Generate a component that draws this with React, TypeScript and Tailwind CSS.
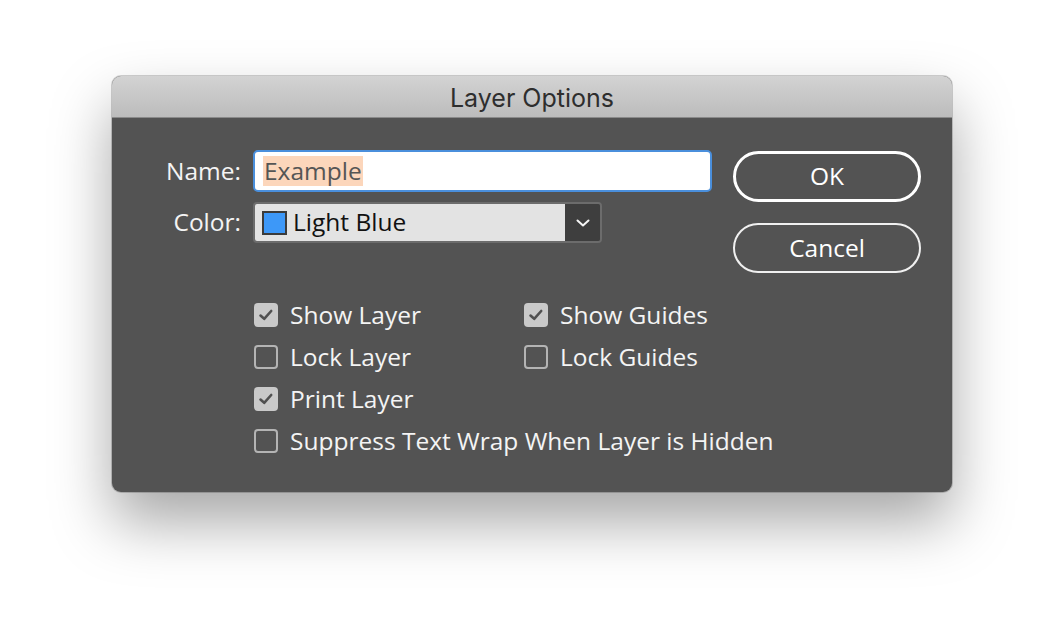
import React from "react";

const font = { fontFamily: '"Open Sans", "Noto Sans", sans-serif' };

function Check({ checked, label }: { checked: boolean; label: string }) {
  return (
    <div className="flex items-center h-[42px]">
      {checked ? (
        <div className="w-[24px] h-[24px] rounded-[4px] bg-[#c9c9c9] flex items-center justify-center">
          <svg width="18" height="18" viewBox="0 0 18 18">
            <path d="M3.5 9.6 L7.2 12.8 L14.2 5" fill="none" stroke="#505050" strokeWidth="2.6" strokeLinecap="round" strokeLinejoin="round" />
          </svg>
        </div>
      ) : (
        <div className="w-[24px] h-[24px] rounded-[4px] border-2 border-[#b4b4b4] box-border" />
      )}
      <span className="ml-[12px] text-[24.5px] font-medium text-[#f4f4f4] leading-none whitespace-nowrap">{label}</span>
    </div>
  );
}

export default function App() {
  return (
    <div className="w-[1064px] h-[640px] bg-white overflow-hidden" style={font}>
      <div className="ml-[112px] mt-[76px] w-[840px] h-[416px] rounded-[9px] overflow-hidden bg-[#535353] shadow-[0_30px_60px_rgba(0,0,0,0.35),0_0_0_1px_rgba(0,0,0,0.18)] flex flex-col">
        <div className="h-[42px] bg-gradient-to-b from-[#d3d3d3] to-[#bcbcbc] border-b border-[#8a8a8a] flex items-center justify-center">
          <span className="text-[25px] text-[#2e2e2e] leading-none mt-[4px]" style={{ fontFamily: 'Inter, "Liberation Sans", sans-serif' }}>Layer Options</span>
        </div>
        <div className="flex pt-[32px]">
          <div className="flex flex-col">
            <div className="flex items-center">
              <div className="w-[129px] text-right text-[24.5px] font-medium text-[#f4f4f4] leading-none">Name:</div>
              <div className="ml-[12px] w-[459px] h-[42px] rounded-[5px] bg-white border-2 border-[#4a8fdc] flex items-center pl-[8px]">
                <span className="bg-[#fcd6bb] text-[24.5px] text-[#555] h-[30px] leading-[30px] px-[1px]">Example</span>
              </div>
            </div>
            <div className="flex items-center mt-[10px]">
              <div className="w-[129px] text-right text-[24.5px] font-medium text-[#f4f4f4] leading-none">Color:</div>
              <div className="ml-[12px] w-[349px] h-[41px] rounded-[4px] border-2 border-[#6c6c6c] flex overflow-hidden">
                <div className="flex-1 bg-[#e3e3e3] flex items-center pl-[7px]">
                  <div className="w-[25px] h-[24px] bg-[#3d98f8] border-2 border-[#3b3b3b]" />
                  <span className="ml-[6px] text-[24.5px] font-medium text-[#111] leading-none">Light Blue</span>
                </div>
                <div className="w-[35px] bg-[#3e3e3e] flex items-center justify-center">
                  <svg width="16" height="10" viewBox="0 0 16 10">
                    <path d="M2.5 2.5 L8 7.5 L13.5 2.5" fill="none" stroke="#f5f5f5" strokeWidth="2" strokeLinecap="round" strokeLinejoin="round" />
                  </svg>
                </div>
              </div>
            </div>
          </div>
          <div className="ml-[21px] mt-[1px] flex flex-col">
            <button className="w-[188px] h-[51px] rounded-full border-[3px] border-white text-[24.5px] font-medium text-white flex items-center justify-center">OK</button>
            <button className="mt-[21px] w-[188px] h-[50px] rounded-full border-2 border-[#f0f0f0] text-[24.5px] font-medium text-white flex items-center justify-center">Cancel</button>
          </div>
        </div>
        <div className="ml-[142px] mt-[21px] flex flex-col">
          <div className="grid grid-cols-[270px_auto]">
            <Check checked label="Show Layer" />
            <Check checked label="Show Guides" />
            <Check checked={false} label="Lock Layer" />
            <Check checked={false} label="Lock Guides" />
            <Check checked label="Print Layer" />
            <div />
          </div>
          <Check checked={false} label="Suppress Text Wrap When Layer is Hidden" />
        </div>
      </div>
    </div>
  );
}
